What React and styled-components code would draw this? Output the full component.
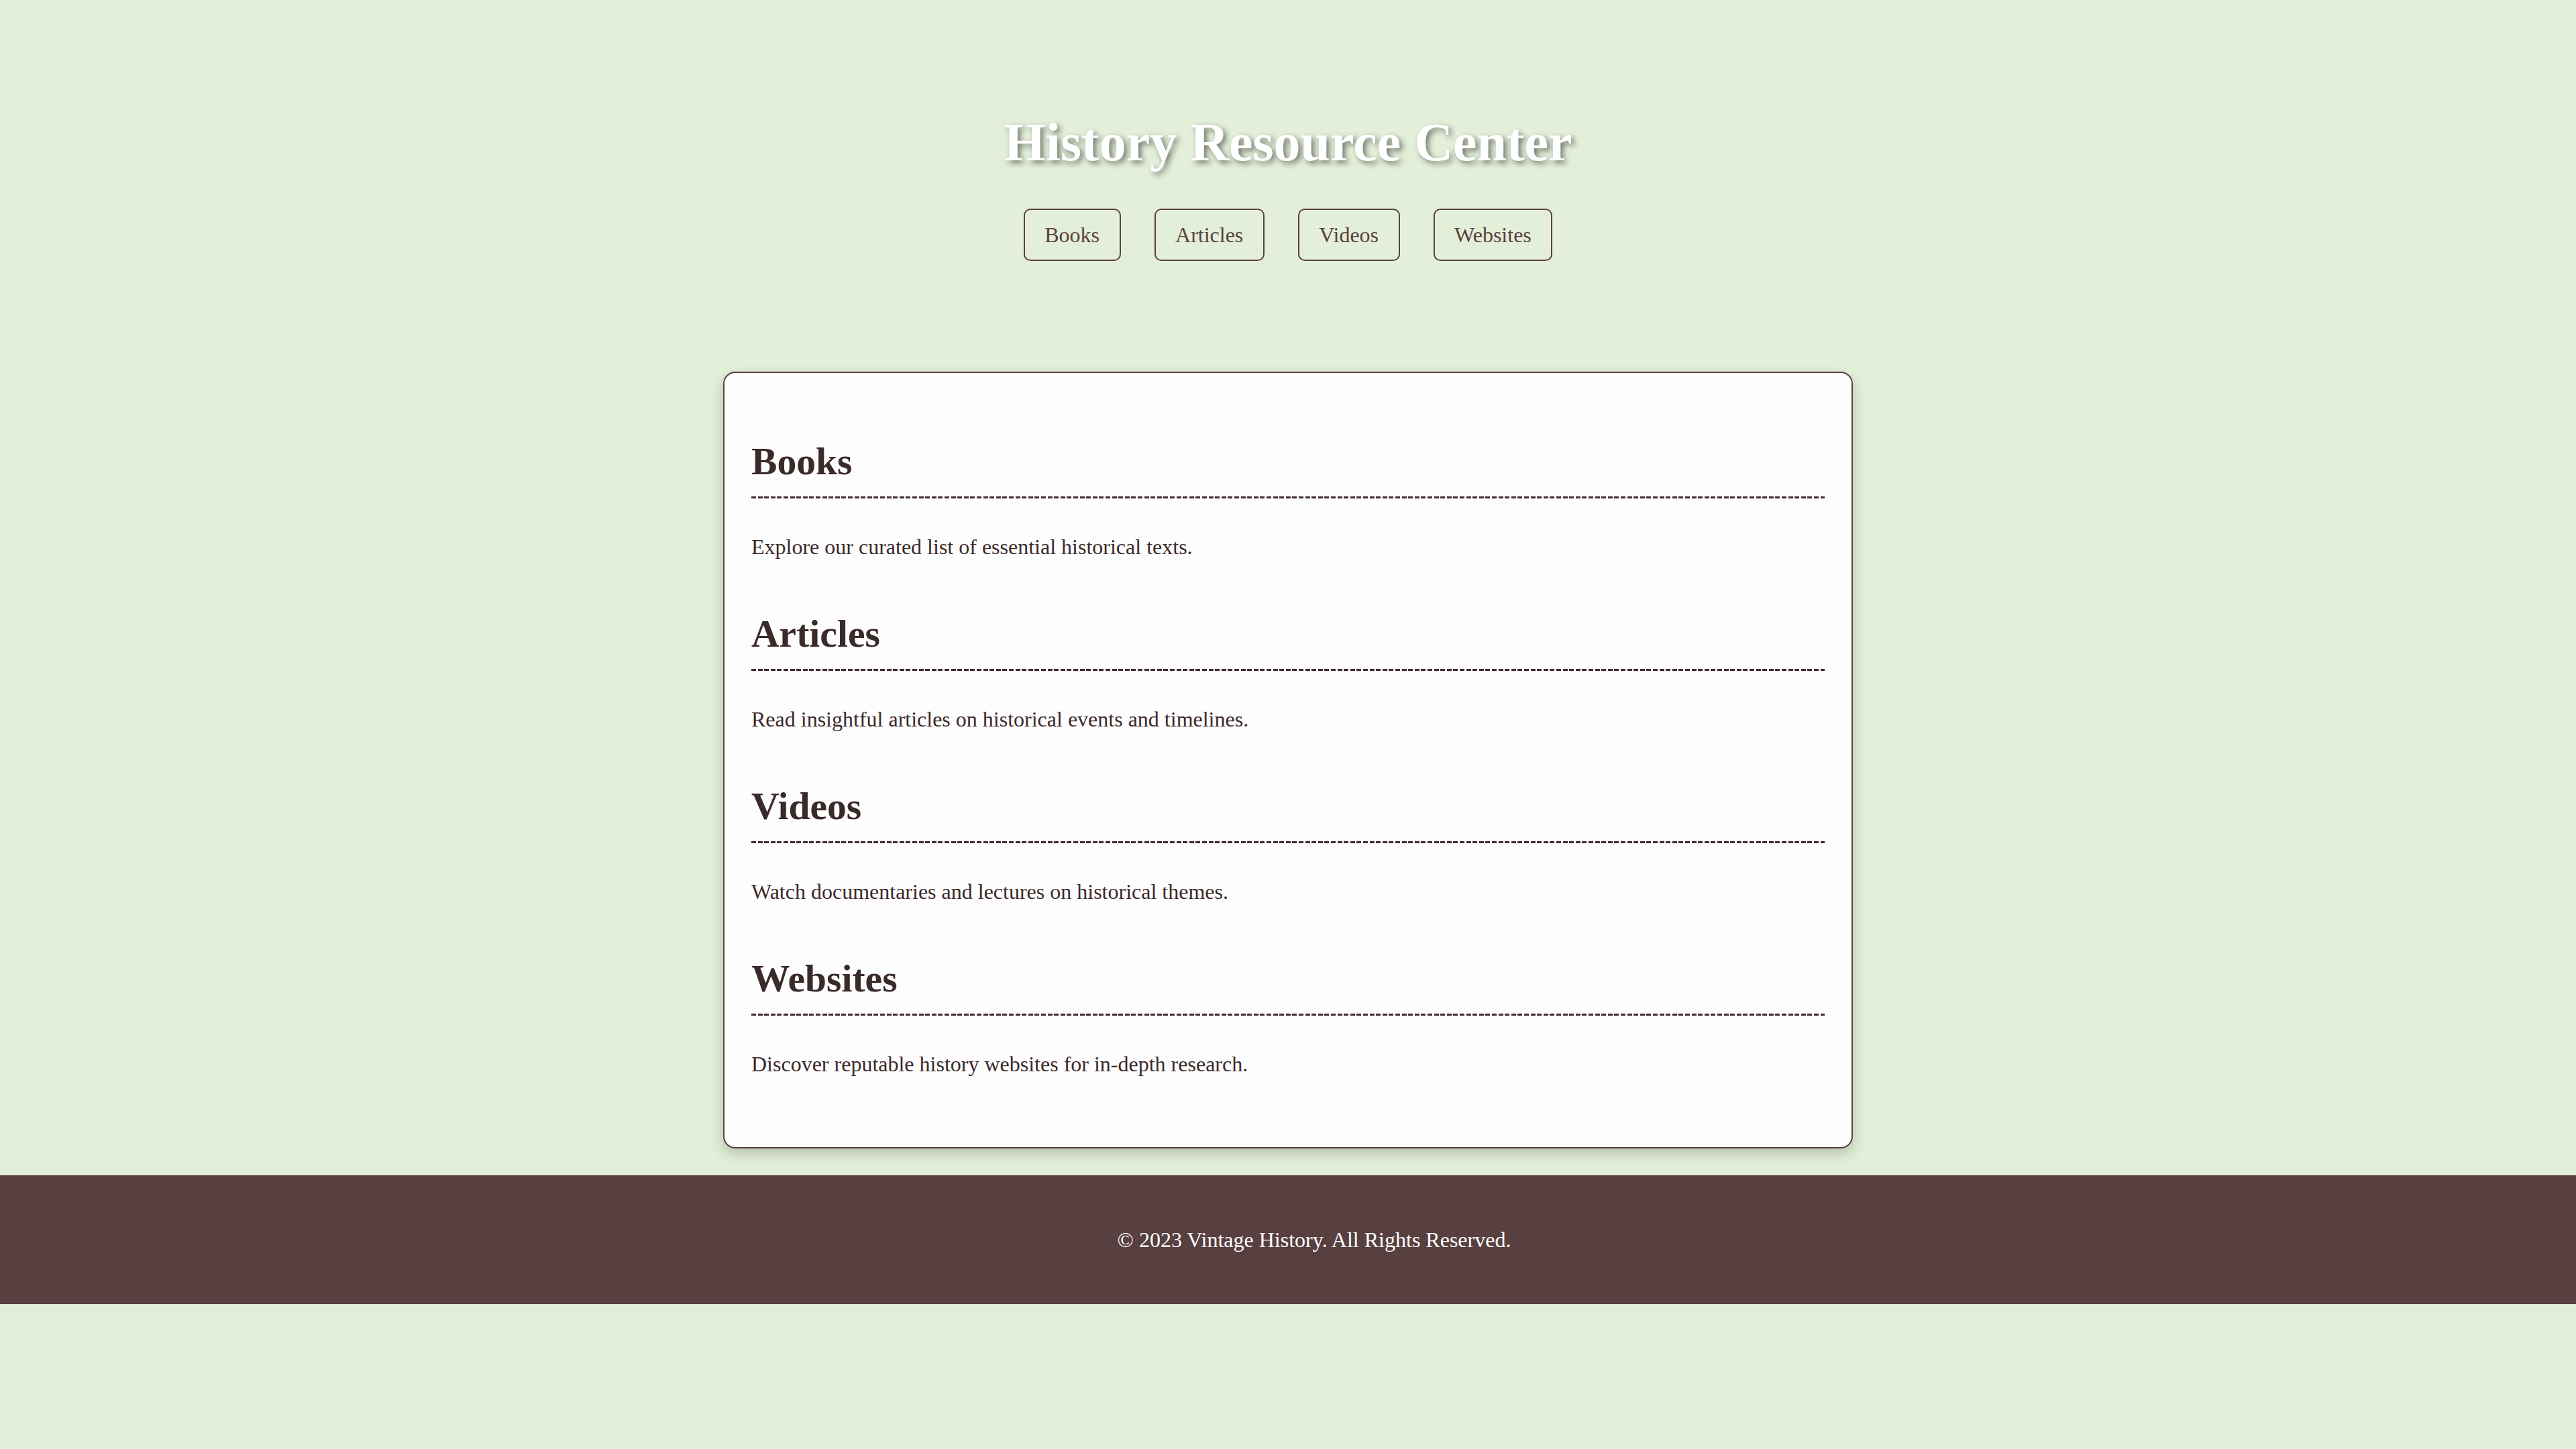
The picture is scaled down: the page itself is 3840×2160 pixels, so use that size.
import React from "react";
import styled, { createGlobalStyle } from "styled-components";

const GlobalStyle = createGlobalStyle`
  html, body {
    margin: 0;
    padding: 0;
    background: #e3efd9;
  }
  body {
    font-family: "Liberation Serif", "Times New Roman", serif;
    color: #3b2a2a;
  }
`;

const Page = styled.div`
  display: flex;
  flex-direction: column;
  min-height: 100vh;
`;

const Header = styled.header`
  display: flex;
  flex-direction: column;
  align-items: center;
  padding-top: 167px;
`;

const Title = styled.h1`
  margin: 0;
  font-size: 80px;
  font-weight: bold;
  line-height: normal;
  color: #ffffff;
  text-shadow: 4px 4px 8px rgba(0, 0, 0, 0.5);
`;

const Nav = styled.nav`
  display: flex;
  gap: 50px;
  margin-top: 53px;
`;

const NavLink = styled.a`
  display: inline-block;
  padding: 18.5px 29.5px;
  font-size: 32px;
  line-height: 37px;
  color: #5a4040;
  text-decoration: none;
  border: 2px solid #5a4040;
  border-radius: 10px;
  cursor: pointer;
`;

const Main = styled.main`
  margin: 165px 0 40px;
`;

const Card = styled.div`
  max-width: 1600px;
  margin: 0 auto;
  padding: 99px 40px 105px;
  background: #fdfdfd;
  border: 2px solid #5a4040;
  border-radius: 18px;
  box-shadow: 0 8px 20px rgba(0, 0, 0, 0.2);
  display: flex;
  flex-direction: column;
  gap: 78px;
`;

const Section = styled.section`
  display: flex;
  flex-direction: column;
`;

const SectionTitle = styled.h2`
  margin: 0;
  font-size: 57.6px;
  font-weight: bold;
  line-height: normal;
  color: #3b2a2a;
  padding-bottom: 23px;
  background-image: repeating-linear-gradient(
    90deg,
    #3b2a2a 0,
    #3b2a2a 7px,
    transparent 7px,
    transparent 9.6px
  );
  background-repeat: no-repeat;
  background-position: left bottom;
  background-size: 100% 3px;
`;

const SectionText = styled.p`
  margin: 54px 0 0;
  font-size: 32px;
  line-height: normal;
  color: #3b2a2a;
`;

const Footer = styled.footer`
  background: #584041;
  color: #ffffff;
  height: 192px;
  padding-left: 78px;
  display: flex;
  align-items: center;
  justify-content: center;
  font-size: 32px;
`;

const sections = [
  { title: "Books", text: "Explore our curated list of essential historical texts." },
  { title: "Articles", text: "Read insightful articles on historical events and timelines." },
  { title: "Videos", text: "Watch documentaries and lectures on historical themes." },
  { title: "Websites", text: "Discover reputable history websites for in-depth research." },
];

export default function App() {
  return (
    <>
      <GlobalStyle />
      <Page>
        <Header>
          <Title>History Resource Center</Title>
          <Nav>
            {sections.map((s) => (
              <NavLink key={s.title} href={`#${s.title.toLowerCase()}`}>
                {s.title}
              </NavLink>
            ))}
          </Nav>
        </Header>
        <Main>
          <Card>
            {sections.map((s) => (
              <Section key={s.title} id={s.title.toLowerCase()}>
                <SectionTitle>{s.title}</SectionTitle>
                <SectionText>{s.text}</SectionText>
              </Section>
            ))}
          </Card>
        </Main>
        <Footer>© 2023 Vintage History. All Rights Reserved.</Footer>
      </Page>
    </>
  );
}
